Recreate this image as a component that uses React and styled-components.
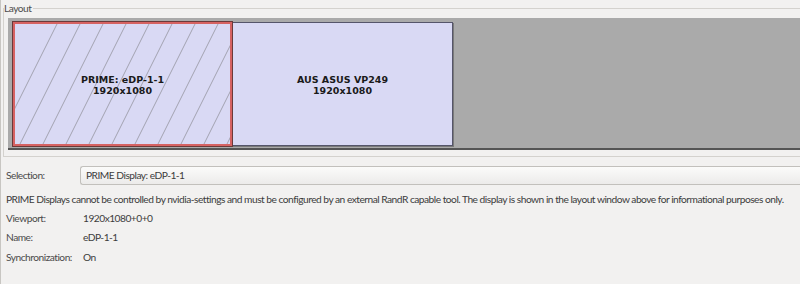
import styled, { createGlobalStyle } from "styled-components";

const GlobalStyle = createGlobalStyle`
  html, body {
    margin: 0;
    padding: 0;
    background: #f2f1f0;
    overflow: hidden;
  }
  body {
    font-family: Lato, "Open Sans", sans-serif;
    font-size: 10.2px;
    letter-spacing: -0.5px;
    color: #3c3c3c;
  }
`;

const monitors = [
  { id: "prime", name: "PRIME: eDP-1-1", mode: "1920x1080", selected: true },
  { id: "asus", name: "AUS ASUS VP249", mode: "1920x1080", selected: false },
];

const info = [
  { label: "Viewport:", value: "1920x1080+0+0" },
  { label: "Name:", value: "eDP-1-1" },
  { label: "Synchronization:", value: "On" },
];

function Hatch() {
  const lines = [];
  for (let x = -20; x < 300; x += 23) {
    lines.push(<line key={x} x1={x + 62} y1={0} x2={x} y2={124} />);
  }
  return (
    <HatchSvg viewBox="0 0 215 120" preserveAspectRatio="none">
      <g stroke="#a2a2b0" strokeWidth="1">{lines}</g>
    </HatchSvg>
  );
}

export default function App() {
  return (
    <>
      <GlobalStyle />
      <Window>
        <Frame>
          <FrameLabel>Layout</FrameLabel>
          <Canvas>
            {monitors.map((m) => (
              <Monitor key={m.id} $selected={m.selected}>
                {m.selected && <Hatch />}
                <MonitorText>
                  <div>{m.name}</div>
                  <div>{m.mode}</div>
                </MonitorText>
              </Monitor>
            ))}
          </Canvas>
        </Frame>

        <Row>
          <Label>Selection:</Label>
          <Combo>PRIME Display: eDP-1-1</Combo>
        </Row>

        <Note>
          PRIME Displays cannot be controlled by nvidia-settings and must be
          configured by an external RandR capable tool. The display is shown in
          the layout window above for informational purposes only.
        </Note>

        <InfoList>
          {info.map((row) => (
            <InfoRow key={row.label}>
              <Label>{row.label}</Label>
              <Value>{row.value}</Value>
            </InfoRow>
          ))}
        </InfoList>
      </Window>
    </>
  );
}

const Window = styled.div`
  width: 800px;
  height: 284px;
  box-sizing: border-box;
  border-left: 1px solid #c8c6c2;
  padding-top: 8px;
`;

const Frame = styled.div`
  position: relative;
  margin-left: 2px;
  border-top: 1px solid #d4d2ce;
  border-left: 1px solid #d4d2ce;
  border-bottom: 1px solid #d4d2ce;
  padding: 9px 0 6px 4px;
`;

const FrameLabel = styled.span`
  position: absolute;
  top: -7px;
  left: 0;
  padding-right: 2px;
  background: #f2f1f0;
  line-height: 12px;
  color: #4c4c4c;
`;

const Canvas = styled.div`
  display: flex;
  height: 132px;
  box-sizing: border-box;
  padding: 4px 0 0 5px;
  background: #aaaaaa;
  border-bottom: 2px solid #555555;
`;

const Monitor = styled.div`
  position: relative;
  width: ${({ $selected }) => ($selected ? "219px" : "221px")};
  height: 124px;
  box-sizing: border-box;
  background: #d9d9f4;
  border: ${({ $selected }) =>
    $selected ? "2px solid #d66262" : "1px solid #55556a"};
  box-shadow: ${({ $selected }) =>
    $selected ? "0 0 0 1px #6a3a3a" : "1px 1px 0 #7a7a7a"};
  display: flex;
  align-items: center;
  justify-content: center;
  overflow: hidden;
  z-index: ${({ $selected }) => ($selected ? 1 : 0)};
`;

const HatchSvg = styled.svg`
  position: absolute;
  inset: 0;
  width: 100%;
  height: 100%;
`;

const MonitorText = styled.div`
  position: relative;
  margin-top: 1px;
  text-align: center;
  font-family: "DejaVu Sans", sans-serif;
  font-weight: bold;
  font-size: 9.5px;
  letter-spacing: 0;
  line-height: 11px;
  color: #1a1a1a;
`;

const Row = styled.div`
  display: flex;
  align-items: center;
  height: 20px;
  margin-top: 8px;
`;

const Label = styled.span`
  width: 77px;
  flex: none;
  padding-left: 5px;
  color: #4a4a4a;
`;

const Combo = styled.div`
  flex: 1;
  height: 19px;
  box-sizing: border-box;
  margin-left: -3px;
  padding-left: 5px;
  display: flex;
  align-items: center;
  border: 1px solid #c2c0bc;
  border-right: none;
  border-radius: 3px 0 0 3px;
  background: linear-gradient(#fbfbfa, #ecebea);
  color: #3c3c3c;
`;

const Note = styled.p`
  margin: 6px 0 0 5px;
  white-space: nowrap;
  line-height: 16px;
  color: #3c3c3c;
`;

const InfoList = styled.div`
  display: flex;
  flex-direction: column;
  margin-top: 1px;
`;

const InfoRow = styled.div`
  display: flex;
  align-items: center;
  height: 19.5px;
`;

const Value = styled.span`
  color: #3c3c3c;
`;
